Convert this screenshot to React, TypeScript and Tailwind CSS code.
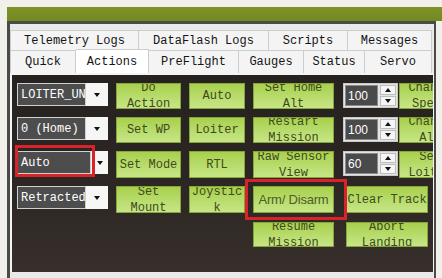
import type { ReactNode } from "react";

const mono = "font-['Liberation_Mono','DejaVu_Sans_Mono',monospace]";

function Tab({ label, w, active = false }: { label: string; w: string; active?: boolean }) {
  return (
    <div
      className={`${w} flex shrink-0 items-center justify-center border-r border-t border-[#cdcdcd] text-[12px] text-[#141414] ${mono} ${
        active ? "-mt-px h-[24px] bg-white" : "h-full bg-[#f4f4f4]"
      }`}
    >
      {label}
    </div>
  );
}

function Btn({ children, className = "", sans = false }: { children: ReactNode; className?: string; sans?: boolean }) {
  return (
    <div
      className={`flex items-center justify-center overflow-hidden border border-[#86a63a] bg-linear-to-b from-[#a8d04b] to-[#c7e686] text-center ${
        sans
          ? "font-['Liberation_Sans',Arial,sans-serif] text-[13px] tracking-[-0.2px] text-[#4d5d26]"
          : `${mono} text-[12px] leading-[16px] text-[#3d4a1c]`
      } ${className}`}
    >
      <span className="whitespace-nowrap">{children}</span>
    </div>
  );
}

function Combo({ value, field = "w-[69px]" }: { value: string; field?: string }) {
  return (
    <div className="flex h-[23px] w-[91px] self-start bg-[#f6f6f6]">
      <div
        className={`${field} flex h-full shrink-0 items-center overflow-hidden whitespace-nowrap border border-[#cfcfcf] bg-[#4d4d4d] pl-[3px] text-[12px] text-white ${mono}`}
      >
        {value}
      </div>
      <div className="flex flex-1 items-center justify-center">
        <div className="h-0 w-0 border-x-[3.5px] border-t-[4px] border-x-transparent border-t-[#111]" />
      </div>
    </div>
  );
}

function Spin({ value }: { value: string }) {
  return (
    <div className="ml-px flex h-[25px] w-[55px] shrink-0 self-start border border-[#c9c9c9] bg-[#e4e4e4] p-px">
      <div className="flex flex-1 items-center border border-[#8a8a8a] bg-[#4a4a4a] pl-[2px] font-['Liberation_Sans',Arial,sans-serif] text-[12px] text-white">
        {value}
      </div>
      <div className="ml-[2px] flex w-[16px] flex-col gap-px">
        <div className="flex flex-1 items-center justify-center border border-[#bdbdbd] bg-[#f5f5f5]">
          <div className="h-0 w-0 border-x-[3px] border-b-[4px] border-x-transparent border-b-[#111]" />
        </div>
        <div className="flex flex-1 items-center justify-center border border-[#bdbdbd] bg-[#f5f5f5]">
          <div className="h-0 w-0 border-x-[3px] border-t-[4px] border-x-transparent border-t-[#111]" />
        </div>
      </div>
    </div>
  );
}

function SpinCell({ value, label }: { value: string; label: ReactNode }) {
  return (
    <div className="flex gap-px">
      <Spin value={value} />
      <Btn className="w-[62px] shrink-0">{label}</Btn>
    </div>
  );
}

export default function App() {
  return (
    <div className="h-[278px] w-[442px] overflow-hidden bg-[#f2f0eb] pl-[7px] pt-[7px]">
      <div className="h-[14px] bg-linear-to-b from-[#7f9328] to-[#748822]" />
      <div className="flex h-[257px] w-[429px] flex-col border-l-[3px] border-r-[2px] border-t-[3px] border-[#4a4a48] bg-[#e9e9e9] pt-[6px]">
        <div className="flex h-[20px] w-[421px] border-l border-[#cdcdcd]">
          <Tab label="Telemetry Logs" w="w-[128px]" />
          <Tab label="DataFlash Logs" w="w-[130px]" />
          <Tab label="Scripts" w="w-[79px]" />
          <Tab label="Messages" w="w-[84px]" />
        </div>
        <div className="flex h-[23px] w-[421px] items-start border-l border-[#cdcdcd]">
          <Tab label="Quick" w="w-[65px]" />
          <Tab label="Actions" w="w-[73px]" active />
          <Tab label="PreFlight" w="w-[90px]" />
          <Tab label="Gauges" w="w-[65px]" />
          <Tab label="Status" w="w-[61px]" />
          <Tab label="Servo" w="w-[67px]" />
        </div>
        <div className="h-[199px] w-[424px] overflow-hidden border-l-2 border-r border-t-2 border-[#f4f4f4] bg-linear-to-b from-[#26221f] via-[#2b2623] to-[#372f2b] pl-[5px] pt-[8px]">
          <div className="grid grid-cols-[91px_65px_56px_81px_auto] grid-rows-[26px_26px_27px_28px_25px] gap-x-2 gap-y-2">
            <Combo value="LOITER_UNLIM" />
            <Btn>Do<br />Action</Btn>
            <Btn>Auto</Btn>
            <Btn>Set Home<br />Alt</Btn>
            <SpinCell value="100" label={<>Change<br />Speed</>} />

            <Combo value="0 (Home)" />
            <Btn>Set WP</Btn>
            <Btn>Loiter</Btn>
            <Btn>Restart<br />Mission</Btn>
            <SpinCell value="100" label={<>Change<br />Alt</>} />

            <div className="relative">
              <Combo value="Auto" field="w-[74px]" />
              <div className="absolute -left-[2px] -top-[6px] h-[32px] w-[80px] border-[3px] border-[#d8232a]" />
            </div>
            <Btn>Set Mode</Btn>
            <Btn>RTL</Btn>
            <Btn>Raw Sensor<br />View</Btn>
            <SpinCell value="60" label={<>Set<br />Loiter</>} />

            <Combo value="Retracted" />
            <Btn className="h-[27px]">Set<br />Mount</Btn>
            <Btn className="h-[27px]">Joystic<br />k</Btn>
            <div className="relative">
              <Btn sans className="h-[27px]">Arm/ Disarm</Btn>
              <div className="absolute -left-[8px] -top-[7px] h-[41px] w-[102px] border-[3px] border-[#d8232a]" />
            </div>
            <Btn className="ml-[4px] h-[27px] w-[82px]">Clear Track</Btn>

            <div />
            <div />
            <div />
            <Btn>Resume<br />Mission</Btn>
            <Btn className="ml-[4px] w-[82px]">Abort<br />Landing</Btn>
          </div>
        </div>
      </div>
    </div>
  );
}
